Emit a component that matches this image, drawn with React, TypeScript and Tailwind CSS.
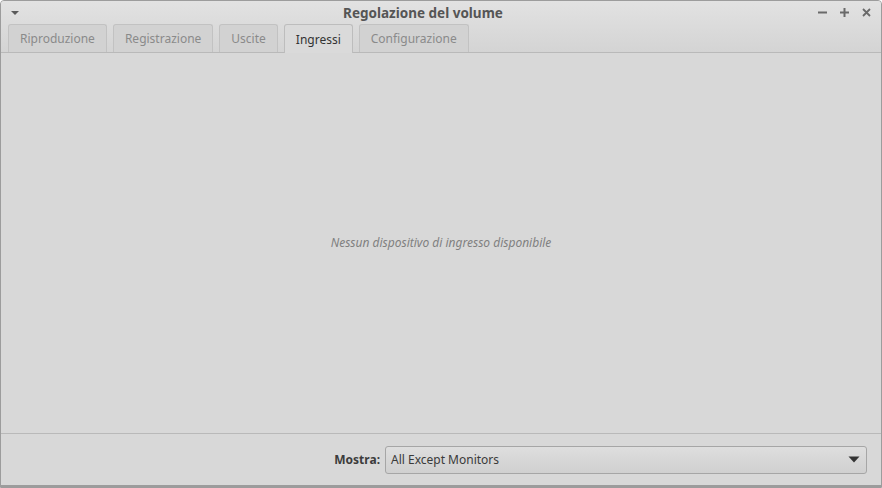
import { useState } from "react";

const tabs = ["Riproduzione", "Registrazione", "Uscite", "Ingressi", "Configurazione"];

export default function App() {
  const [active, setActive] = useState("Ingressi");

  return (
    <div
      className="w-[882px] h-[488px] flex flex-col bg-[#d8d8d8] border border-[#9c9c9c] rounded-t-[4px] overflow-hidden text-[12px] text-[#3c3c3c]"
      style={{ fontFamily: '"Noto Sans", "Open Sans", sans-serif' }}
    >
      {/* Title bar + tab strip */}
      <div className="bg-gradient-to-b from-[#e2e2e2] to-[#d4d4d4] border-b border-[#b9b9b9]">
        <div className="h-[23px] flex items-center px-[9px]">
          <svg width="10" height="6" viewBox="0 0 10 6" className="shrink-0">
            <path d="M1 1h8L5 5z" fill="#5a5a5a" />
          </svg>
          <div className="flex-1 text-center font-bold text-[13.5px] text-[#555] pl-[8px] pt-[1px]">Regolazione del volume</div>
          <div className="flex items-center gap-[13px] pr-[1px]">
            <svg width="9" height="9" viewBox="0 0 9 9">
              <rect x="0" y="3.5" width="9" height="2" fill="#6a6a6a" />
            </svg>
            <svg width="9" height="9" viewBox="0 0 9 9">
              <rect x="0" y="3.5" width="9" height="2" fill="#6a6a6a" />
              <rect x="3.5" y="0" width="2" height="9" fill="#6a6a6a" />
            </svg>
            <svg width="9" height="9" viewBox="0 0 9 9">
              <path d="M1 1l7 7M8 1l-7 7" stroke="#6a6a6a" strokeWidth="1.8" />
            </svg>
          </div>
        </div>
        <div className="flex items-end gap-[6px] pl-[7px] h-[28px]">
          {tabs.map((t) => {
            const isActive = t === active;
            return (
              <button
                key={t}
                onClick={() => setActive(t)}
                className={
                  isActive
                    ? "h-[29px] -mb-px px-[11px] rounded-t-[3px] border border-b-0 border-[#bdbdbd] bg-[#dadada] text-[#333] text-[12px] leading-none pt-[1px]"
                    : "h-[28px] px-[11px] rounded-t-[3px] border border-b-0 border-[#c2c2c2] bg-[#d2d2d2] text-[#8a8a8a] text-[12px] leading-none pt-[1px]"
                }
              >
                {t}
              </button>
            );
          })}
        </div>
      </div>

      {/* Content */}
      <div className="flex-1 flex items-center justify-center border-b border-[#b9b9b9] pb-[1px]">
        <span className="italic text-[#808080] text-[12px]">Nessun dispositivo di ingresso disponibile</span>
      </div>

      {/* Bottom bar */}
      <div className="h-[53px] flex items-center justify-end pr-[14px] gap-[5px] border-b-2 border-[#9c9c9c]">
        <span className="font-bold text-[#3c3c3c]">Mostra:</span>
        <div className="w-[482px] h-[28px] flex items-center justify-between pl-[5px] pr-[6px] rounded-[3px] border border-[#a6a6a6] bg-gradient-to-b from-[#dedede] to-[#d0d0d0]">
          <span className="text-[#3a3a3a]">All Except Monitors</span>
          <svg width="12" height="7" viewBox="0 0 12 7">
            <path d="M0.5 0.5h11L6 6.5z" fill="#333" />
          </svg>
        </div>
      </div>
    </div>
  );
}
